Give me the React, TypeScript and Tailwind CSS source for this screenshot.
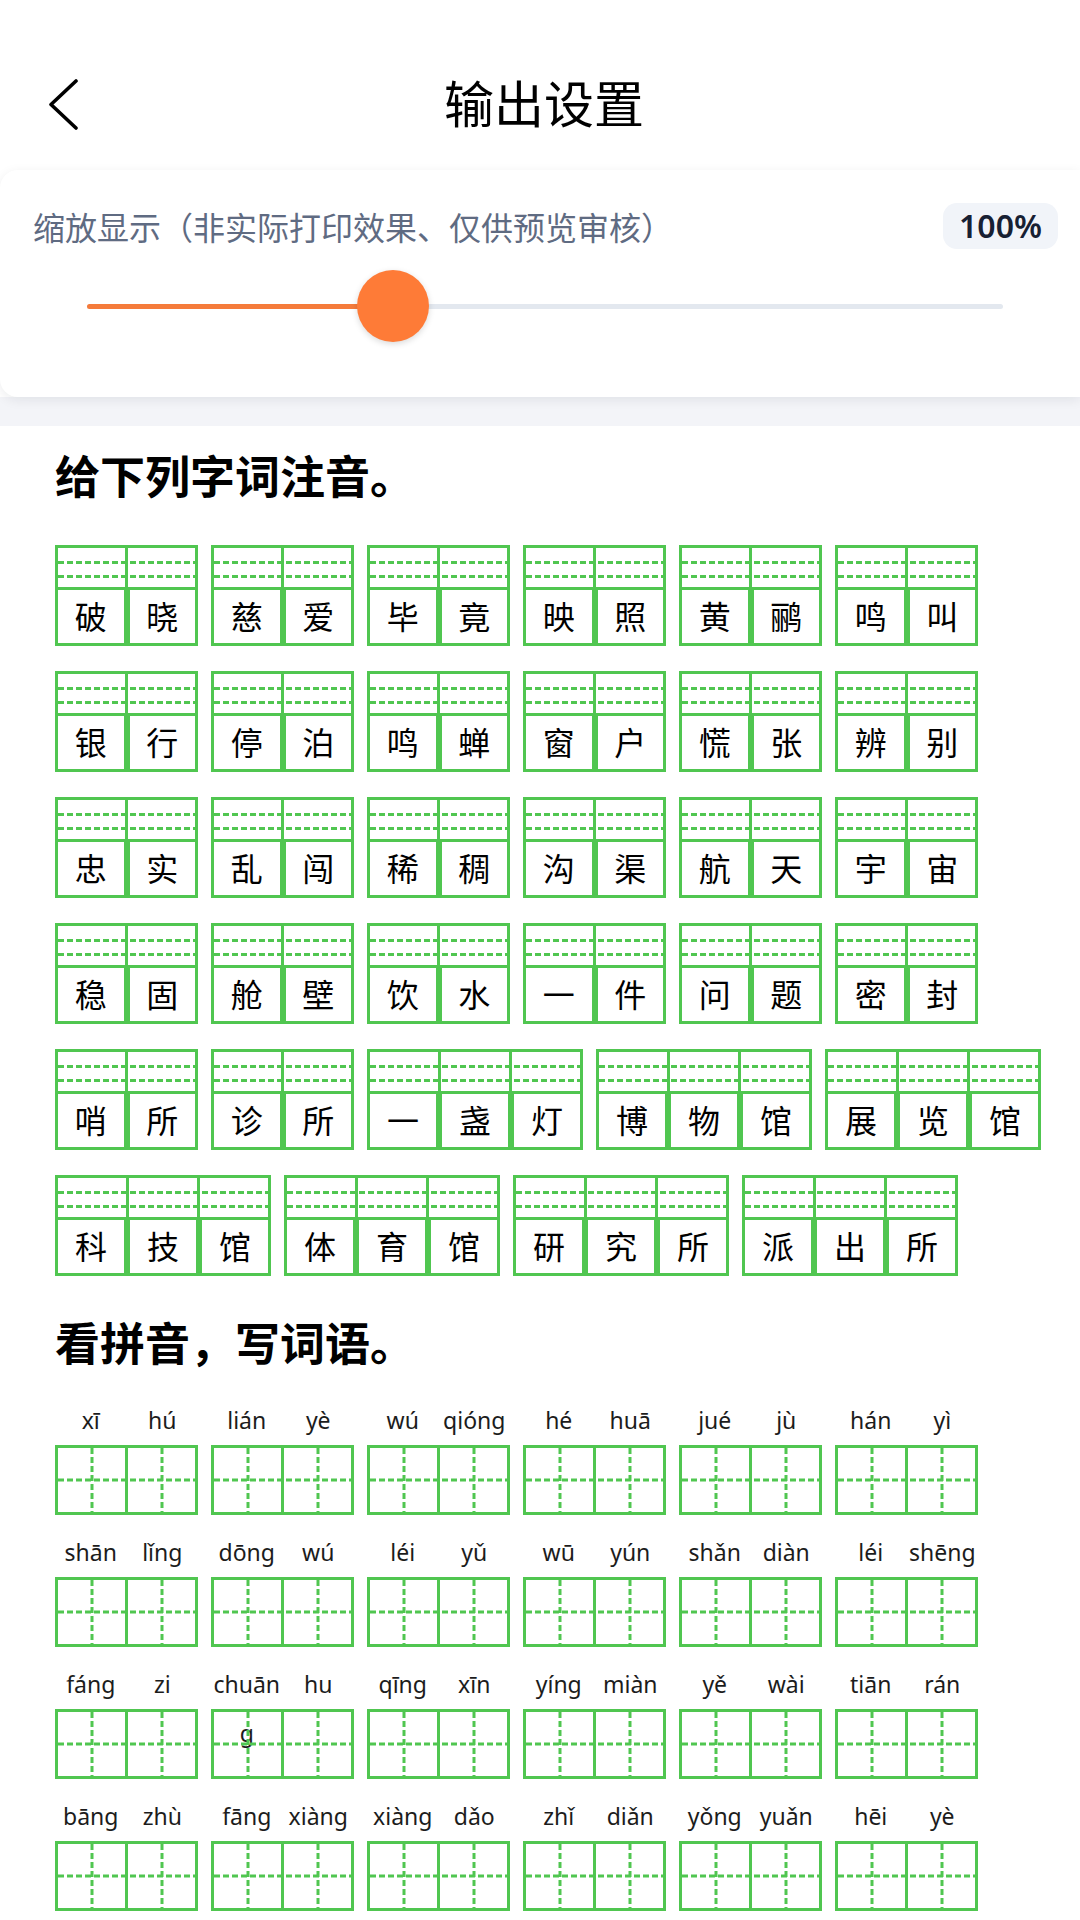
/**
 * 输出设置 — worksheet preview page
 * Zoom slider card on top, then the two practice sections
 * (四线格注音 + 田字格写词语).
 */

const GREEN = 'border-[#50c650]';

const ZHUYIN_ROWS: string[][] = [
  ['破晓', '慈爱', '毕竟', '映照', '黄鹂', '鸣叫'],
  ['银行', '停泊', '鸣蝉', '窗户', '慌张', '辨别'],
  ['忠实', '乱闯', '稀稠', '沟渠', '航天', '宇宙'],
  ['稳固', '舱壁', '饮水', '一件', '问题', '密封'],
  ['哨所', '诊所', '一盏灯', '博物馆', '展览馆'],
  ['科技馆', '体育馆', '研究所', '派出所'],
];

const PINYIN_ROWS: string[][][] = [
  [['xī', 'hú'], ['lián', 'yè'], ['wú', 'qióng'], ['hé', 'huā'], ['jué', 'jù'], ['hán', 'yì']],
  [['shān', 'lǐng'], ['dōng', 'wú'], ['léi', 'yǔ'], ['wū', 'yún'], ['shǎn', 'diàn'], ['léi', 'shēng']],
  [['fáng', 'zi'], ['chuāng', 'hu'], ['qīng', 'xīn'], ['yíng', 'miàn'], ['yě', 'wài'], ['tiān', 'rán']],
  [['bāng', 'zhù'], ['fāng', 'xiàng'], ['xiàng', 'dǎo'], ['zhǐ', 'diǎn'], ['yǒng', 'yuǎn'], ['hēi', 'yè']],
];

const boxWidth = (n: number) => (n === 3 ? 'w-[216px]' : 'w-[143px]');

// horizontal / vertical dashed guide lines
const DASH_H =
  'absolute left-0 right-0 h-[3px] bg-[image:repeating-linear-gradient(90deg,#50c650_0_6px,transparent_6px_9px)]';
const DASH_V =
  'absolute top-0 bottom-0 w-[3px] bg-[image:repeating-linear-gradient(180deg,#50c650_0_6px,transparent_6px_9px)]';

function ZhuyinBox({ word }: { word: string }) {
  const chars = Array.from(word);
  return (
    <div className={`flex shrink-0 flex-col ${boxWidth(chars.length)}`}>
      {/* pinyin four-line area */}
      <div className={`relative flex h-[45px] border-[3px] ${GREEN}`}>
        {chars.map((c, i) => (
          <div key={c + i} className={`flex-1 ${i > 0 ? `border-l-[3px] ${GREEN}` : ''}`} />
        ))}
        <div className={`${DASH_H} top-[13px]`} />
        <div className={`${DASH_H} top-[27px]`} />
      </div>
      {/* character cells */}
      <div className="flex h-[56px]">
        {chars.map((c, i) => (
          <div
            key={c + i}
            className={`flex-1 flex items-center justify-center border-x-[3px] border-b-[3px] ${GREEN} pb-[3px] text-[32px] leading-none text-black`}
          >
            {c}
          </div>
        ))}
      </div>
    </div>
  );
}

function TianziBox({ pinyin }: { pinyin: string[] }) {
  return (
    <div className="flex w-[143px] shrink-0 flex-col">
      <div className="flex h-[49px] font-['Noto_Sans',sans-serif] text-[23px] leading-[49px] text-[#1c1c1c]">
        {pinyin.map((p, i) => (
          <span key={p + i} className="w-1/2 break-all text-center">
            {p}
          </span>
        ))}
      </div>
      <div className={`relative flex h-[70px] border-[3px] ${GREEN}`}>
        {pinyin.map((p, i) => (
          <div key={p + i} className={`relative flex-1 ${i > 0 ? `border-l-[3px] ${GREEN}` : ''}`}>
            <div className={`${DASH_V} left-1/2 -translate-x-1/2`} />
          </div>
        ))}
        <div className={`${DASH_H} top-1/2 -translate-y-1/2`} />
      </div>
    </div>
  );
}

export default function App() {
  return (
    <div className="w-[1080px] min-h-[1920px] overflow-hidden bg-white font-['Noto_Sans_CJK_SC',sans-serif]">
      {/* header */}
      <header className="grid h-[170px] grid-cols-[1fr_auto_1fr] items-start pt-[70px]">
        <div className="pl-[48px] pt-[9px]">
          <svg width="32" height="52" viewBox="0 0 32 52" fill="none">
            <path d="M28 2 L3 25.5 L28 49" stroke="#000" strokeWidth="3.6" strokeLinecap="round" strokeLinejoin="round" />
          </svg>
        </div>
        <h1 className="pl-[8px] text-[50px] leading-[62px] font-normal text-black">输出设置</h1>
        <div />
      </header>

      {/* zoom card */}
      <div className="relative z-10 h-[227px] rounded-l-[18px] bg-white pl-[33px] pr-[22px] pt-[33px] shadow-[0_3px_12px_rgba(15,23,42,0.08)]">
        <div className="flex items-center justify-between">
          <span className="text-[32px] leading-[46px] text-[#5f6b82]">
            缩放显示（非实际打印效果、仅供预览审核）
          </span>
          <span className="flex h-[46px] w-[115px] items-center justify-center rounded-[14px] bg-[#f1f4f9] font-['Noto_Sans',sans-serif] text-[32px] font-semibold text-[#172033]">
            100%
          </span>
        </div>
        <div className="relative ml-[54px] mt-[21px] flex h-[72px] w-[916px] items-center">
          <div className="h-[5px] w-full rounded-full bg-[#e3e8ef]">
            <div className="h-full w-[306px] rounded-full bg-[#f57b3b]" />
          </div>
          <div className="absolute left-[270px] top-0 h-[72px] w-[72px] rounded-full bg-[#fe7b37] shadow-[0_2px_6px_rgba(0,0,0,0.15)]" />
        </div>
      </div>
      <div className="h-[29px] bg-[#f3f4f8]" />

      {/* worksheet */}
      <main className="pl-[55px] pt-[19px]">
        <h2 className="text-[45px] font-bold leading-[60px] text-black">给下列字词注音。</h2>
        <div className="mt-[40px] flex flex-col gap-[25px]">
          {ZHUYIN_ROWS.map((row, r) => (
            <div key={r} className="flex gap-[13px]">
              {row.map((w) => (
                <ZhuyinBox key={w} word={w} />
              ))}
            </div>
          ))}
        </div>

        <h2 className="mt-[36px] text-[45px] font-bold leading-[60px] text-black">看拼音，写词语。</h2>
        <div className="mt-[24px] flex flex-col gap-[13px]">
          {PINYIN_ROWS.map((row, r) => (
            <div key={r} className="flex gap-[13px]">
              {row.map((p, i) => (
                <TianziBox key={i} pinyin={p} />
              ))}
            </div>
          ))}
        </div>
      </main>
    </div>
  );
}
